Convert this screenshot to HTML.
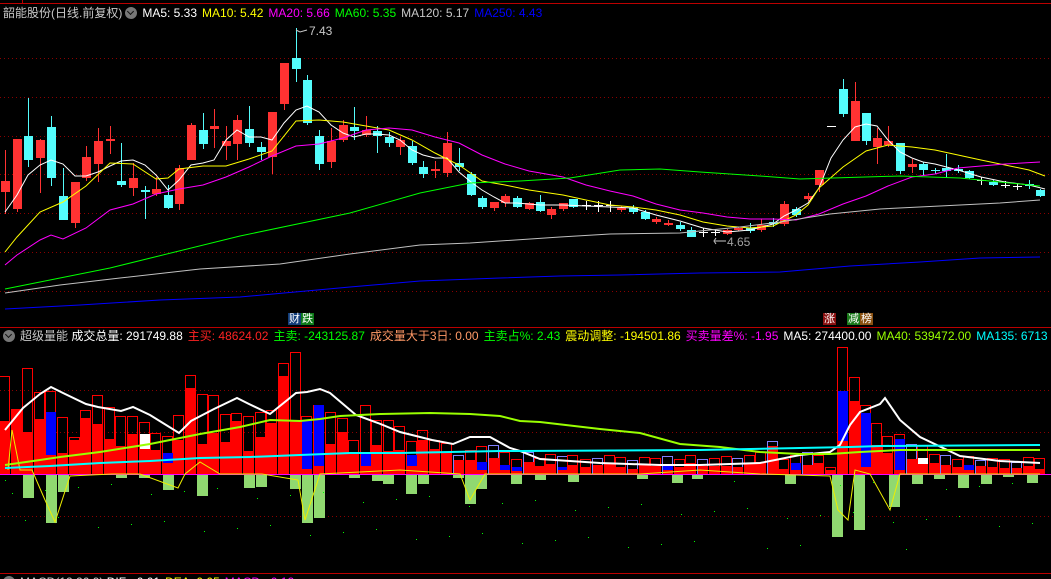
<!DOCTYPE html>
<html><head><meta charset="utf-8">
<style>
html,body{margin:0;padding:0;background:#000;overflow:hidden}
body{width:1051px;height:579px;position:relative;font-family:"Liberation Sans","Noto Sans CJK SC",sans-serif;font-size:12px}
.t{position:absolute;white-space:nowrap;line-height:14px}
.t span{margin-right:5px}
svg{position:absolute;left:0;top:0}
.ic{display:inline-block;width:12px;height:12px;border-radius:6px;background:#777;vertical-align:-2px;margin:0 5px 0 3px;position:relative}
.ic:after{content:"";position:absolute;left:3px;top:2px;width:4px;height:4px;border-right:1.5px solid #111;border-bottom:1.5px solid #111;transform:rotate(45deg)}
</style></head><body>
<svg id="s" width="1051" height="579" xmlns="http://www.w3.org/2000/svg"></svg>
<div class="t" style="left:3px;top:6px;color:#c8c8c8">韶能股份(日线.前复权)<i class="ic"></i><span style="color:#fff">MA5: 5.33</span><span style="color:#ff0">MA10: 5.42</span><span style="color:#f0f">MA20: 5.66</span><span style="color:#0f0">MA60: 5.35</span><span style="color:#c8c8c8">MA120: 5.17</span><span style="color:#00f">MA250: 4.43</span></div>
<div class="t" style="left:309px;top:24px;color:#c8c8c8">7.43</div>
<div class="t" style="left:727px;top:235px;color:#a0a0a0">4.65</div>
<div class="t" style="left:288px;top:312px;color:#fff;font-size:11px"><b style="font-weight:normal;background:#123d7a;padding:0 1px">财</b><b style="font-weight:normal;background:#0d7a18;padding:0 1px">跌</b></div>
<div class="t" style="left:823px;top:312px;color:#fff;font-size:11px"><b style="font-weight:normal;background:#8a1010;padding:0 1px">涨</b></div>
<div class="t" style="left:847px;top:312px;color:#fff;font-size:11px"><b style="font-weight:normal;background:#1a7a1a;padding:0 1px">减</b><b style="font-weight:normal;background:#8a5010;padding:0 1px">榜</b></div>
<div class="t" style="left:0px;top:329px;color:#c8c8c8"><i class="ic"></i>超级量能 <span style="color:#fff">成交总量: 291749.88</span><span style="color:#f22">主买: 48624.02</span><span style="color:#0f0">主卖: -243125.87</span><span style="color:#ff9966">成交量大于3日: 0.00</span><span style="color:#0f0">主卖占%: 2.43</span><span style="color:#ff0">震动调整: -194501.86</span><span style="color:#f0f">买卖量差%: -1.95</span><span style="color:#fff">MA5: 274400.00</span><span style="color:#9f0">MA40: 539472.00</span><span style="color:#0ff">MA135: 6713</span></div>
<div class="t" style="left:0px;top:575px;color:#c8c8c8"><i class="ic"></i>MACD(12,26,9) <span style="color:#fff">DIF: -0.01</span><span style="color:#ff0">DEA: 0.05</span><span style="color:#f0f">MACD: -0.12</span></div>
<script>
var s=document.getElementById('s'),h='';
function L(x1,y1,x2,y2,c,w,d){h+='<line x1="'+x1+'" y1="'+y1+'" x2="'+x2+'" y2="'+y2+'" stroke="'+c+'" stroke-width="'+(w||1)+'"'+(d?' stroke-dasharray="'+d+'"':'')+' shape-rendering="crispEdges"/>';}
function R(x,y,w,ht,f,st){h+='<rect x="'+x+'" y="'+y+'" width="'+w+'" height="'+ht+'" fill="'+(f||'none')+'"'+(st?' stroke="'+st+'"':'')+' shape-rendering="crispEdges"/>';}
function P(pts,c,w){h+='<polyline fill="none" stroke="'+c+'" stroke-width="'+(w||1)+'" points="'+pts.map(function(p){return p.join(',')}).join(' ')+'"/>';}
L(0,3.5,1051,3.5,'#b00');L(22.5,0,22.5,3,'#b00');
L(0,327.5,1051,327.5,'#b00');L(0,573.5,1051,573.5,'#b00');
[58,97,136,174,213,252,291].forEach(function(y){L(0,y+.5,1051,y+.5,'#8a0000',1,'1 3')});
[390,432,516].forEach(function(y){L(0,y+.5,1051,y+.5,'#8a0000',1,'1 3')});
var C=[[5,181,192,150,214,'r'],[17,139,209,139,212,'r'],[28,136,160,98,167,'c'],[40,140,158,139,193,'r'],[51,127,178,116,186,'c'],[63,196,220,168,220,'c'],[75,182,223,182,228,'r'],[86,157,178,146,181,'r'],[98,141,164,128,182,'r'],[110,139,141,126,154,'r'],[121,181,185,143,187,'c'],[133,178,188,163,196,'r'],[145,190,192,186,219,'c'],[156,189,194,177,196,'r'],[168,195,208,185,209,'c'],[179,168,204,165,210,'r'],[191,125,160,123,160,'r'],[203,130,144,113,149,'c'],[214,126,129,109,148,'r'],[226,141,146,126,160,'r'],[237,120,144,115,160,'r'],[249,129,143,106,147,'c'],[261,147,152,142,160,'c'],[272,112,157,112,174,'r'],[284,63,104,63,110,'r'],[296,58,69,28,82,'c'],[307,80,123,75,125,'c'],[319,136,164,130,170,'c'],[331,141,162,128,168,'r'],[343,125,140,120,142,'r'],[354,127,131,107,140,'c'],[366,130,135,116,137,'r'],[377,131,136,126,153,'c'],[389,137,143,132,147,'c'],[400,140,147,137,155,'r'],[412,146,163,141,165,'c'],[423,167,174,161,178,'c'],[435,169,171,161,178,'r'],[447,143,173,132,177,'r'],[459,163,167,148,171,'c'],[471,174,195,172,196,'c'],[482,198,207,196,209,'c'],[494,202,208,202,211,'r'],[505,196,203,194,207,'r'],[517,198,207,196,208,'c'],[529,203,209,202,210,'r'],[540,202,211,195,212,'c'],[551,209,215,207,219,'r'],[563,203,209,203,211,'r'],[573,199,207,199,208,'c'],[586,205,206,201,210,'w'],[598,205,206,201,212,'w'],[610,205,206,201,212,'w'],[621,208,210,206,212,'r'],[633,208,212,205,214,'c'],[645,212,219,210,220,'c'],[656,219,222,217,224,'r'],[668,223,225,220,226,'r'],[680,225,229,222,231,'c'],[691,230,237,227,237,'c'],[703,232,233,228,237,'w'],[715,232,233,229,236,'w'],[727,230,234,229,235,'r'],[738,228,230,227,231,'r'],[750,228,231,223,233,'c'],[761,225,230,219,232,'r'],[773,222,224,218,227,'c'],[784,204,224,201,226,'r'],[796,209,215,207,217,'c'],[808,196,199,193,201,'r'],[819,170,185,170,192,'r'],[831,126,127,126,127,'w'],[843,89,114,79,117,'c'],[855,101,141,82,141,'r'],[866,113,141,113,145,'c'],[877,138,147,128,164,'r'],[888,141,145,126,147,'r'],[900,143,171,143,174,'c'],[912,164,167,159,173,'r'],[923,164,170,162,175,'c'],[935,170,171,168,174,'c'],[946,168,171,154,178,'c'],[958,169,171,165,173,'c'],[969,171,178,170,179,'c'],[981,180,181,177,185,'w'],[993,182,185,180,186,'c'],[1005,185,186,181,188,'w'],[1017,186,187,183,190,'w'],[1029,184,186,180,189,'c'],[1040,190,196,189,197,'c']];
C.forEach(function(c){var col=c[5]=='r'?'#ff3232':c[5]=='c'?'#54fcfc':'#fff';var x=c[0];
L(x+.5,c[3],x+.5,c[4],col);var ht=Math.max(1,c[2]-c[1]);R(x-4,c[1],9,ht,col);});
P([[296,30],[300,32],[307,30]],'#c8c8c8');P([[715,241],[726,241]],'#c8c8c8');P([[716,238],[714,241],[716,244]],'#c8c8c8');
P([[5,212],[17,195],[28,175],[40,165],[51,160],[63,164],[75,176],[86,176],[98,172],[110,166],[121,161],[133,160],[145,165],[156,175],[168,190],[179,180],[191,165],[203,163],[214,160],[226,140],[237,130],[249,137],[261,137],[272,140],[284,123],[296,110],[307,106],[319,112],[331,125],[343,133],[354,137],[366,134],[377,134],[389,135],[400,140],[412,150],[423,155],[435,158],[447,158],[459,172],[471,182],[482,190],[494,197],[505,203],[517,203],[540,205],[563,205],[586,206],[610,207],[633,208],[656,215],[680,221],[703,228],[727,232],[750,230],[773,224],[784,216],[796,210],[808,203],[819,188],[831,158],[843,140],[855,127],[866,124],[877,126],[888,140],[900,152],[912,158],[923,162],[935,164],[958,170],[981,177],[1005,182],[1029,185],[1045,189]],'#fff');
P([[5,252],[17,237],[40,212],[63,202],[86,186],[110,163],[133,164],[156,179],[168,178],[179,169],[203,166],[226,166],[249,159],[272,151],[296,121],[319,120],[343,122],[366,126],[389,130],[412,140],[435,153],[459,165],[482,181],[505,185],[529,190],[563,195],[586,200],[610,205],[633,207],[656,210],[680,215],[703,222],[727,226],[750,228],[773,226],[796,215],[808,205],[819,188],[843,167],[866,151],[888,145],[912,147],[935,150],[958,155],[981,160],[1005,165],[1029,170],[1045,176]],'#ff0');
P([[5,265],[17,255],[40,240],[51,235],[63,239],[86,228],[110,210],[133,204],[156,194],[179,189],[203,185],[226,177],[249,167],[272,156],[296,146],[319,144],[343,138],[366,130],[389,128],[412,130],[435,137],[459,143],[482,155],[505,164],[529,171],[563,177],[586,185],[610,191],[633,196],[656,204],[680,210],[703,213],[727,217],[750,219],[773,219],[796,220],[819,214],[843,204],[866,196],[888,186],[912,177],[935,174],[958,168],[981,166],[1005,164],[1040,162]],'#f0f');
P([[5,289],[110,268],[240,236],[350,213],[420,193],[470,183],[520,181],[570,178],[620,170],[660,169],[700,172],[760,176],[800,179],[900,176],[960,178],[1040,186]],'#0f0');
P([[5,293],[60,285],[120,278],[200,269],[280,264],[350,254],[420,245],[470,243],[560,237],[610,234],[680,233],[740,227],[780,222],[830,214],[880,209],[940,206],[1000,203],[1040,200]],'#c0c0c0');
P([[5,309],[80,305],[160,300],[240,297],[350,287],[420,281],[500,278],[560,276],[620,275],[700,273],[780,272],[850,266],[920,262],[980,258],[1040,257]],'#00f');
var B=474;
var V=[[376,421],[409,409],[368,432],[392,419],[391,412,'b',455],[417,453],[437,440],[410,418],[395,424],[407,439],[416,446],[416,434],[422,434,'w',449],[433,450],[436,453,'b',463],[415,440],[375,388],[394,444],[395,433],[414,442],[413,421],[416,451],[412,437],[410,423],[363,376],[352,420],[416,420,'b',469],[405,405,'b',466],[412,444],[418,432],[440,453],[405,453,'b',466],[420,445],[420,451],[426,450],[441,455,'b',466],[430,440],[440,449],[443,452],[455,460],[450,460],[446,462,'b',470],[445,458],[452,465,'b',470],[459,467,'b',471],[452,462],[458,466],[454,464],[456,467,'b',470],[455,465],[459,467],[458,465],[455,464],[457,467],[460,469],[457,465],[458,466],[456,465,'b',470],[459,467],[455,463],[459,466],[458,466],[456,466],[458,467],[455,463],[452,462],[441,446],[459,469],[455,463,'b',470],[452,465],[455,463],[467,470],[347,391,'b',441],[377,401],[405,413,'b',467],[423,445],[436,453],[434,439,'b',470],[444,459],[445,458,'w',464],[454,463],[455,465],[459,467],[456,465,'b',470],[460,466],[458,467],[459,468],[462,468],[457,466],[458,469],[459,468],[461,468],[462,470],[460,466]];
V.forEach(function(v,i){if(i>=C.length)return;var x=C[i][0];var oc=i>=26&&v[0]>440&&!(i%3)?'#8080ff':'#f00';
R(x-5.5,v[0]+.5,10,B-v[0]-.5,null,oc);
if(v[2]=='b'){R(x-5,v[1],10,v[3]-v[1],'#00f');R(x-5,v[3],10,B-v[3],'#f00');}
else if(v[2]=='w'){R(x-5,v[1],10,v[3]-v[1],'#fff');R(x-5,v[3],10,B-v[3],'#f00');}
else R(x-5,v[1],10,B-v[1],'#f00');});
L(0,B+.5,1051,B+.5,'#f0f');
var N=[[23,498],[46,523],[58,492],[116,478],[139,478],[163,490],[197,496],[244,488],[256,487],[290,489],[302,523],[314,518],[349,478],[372,481],[383,484],[406,494],[418,484],[453,478],[465,504],[476,489],[511,484],[535,480],[568,482],[637,479],[672,483],[692,479],[785,484],[832,537],[854,530],[889,507],[912,484],[934,479],[958,488],[981,484],[1003,477],[1027,483]];
N.forEach(function(n){R(n[0],B+1,11,n[1]-B-1,'#90d870')});
P([[8,470],[12,430],[20,470],[32,470],[45,500],[55,522],[70,476],[112,474],[124,474],[140,474],[178,488],[185,474],[200,462],[220,474],[250,474],[262,474],[298,480],[305,520],[320,474],[400,470],[460,474],[470,500],[485,474],[540,474],[640,474],[700,470],[760,474],[830,476],[838,510],[848,520],[855,470],[870,474],[890,510],[900,474],[960,474],[980,474],[1040,474]],'#ee0',1);
P([[5,430],[23,408],[40,394],[51,387],[63,393],[86,404],[98,407],[121,411],[133,407],[150,415],[179,433],[191,421],[214,409],[237,398],[249,404],[270,414],[296,393],[307,392],[320,389],[330,393],[356,415],[378,423],[400,432],[432,440],[453,444],[470,437],[490,437],[510,448],[520,451],[540,459],[600,463],[660,465],[700,465],[760,463],[800,455],[830,452],[840,445],[850,425],[860,412],[880,404],[885,398],[900,420],[920,437],[960,456],[1000,461],[1040,463]],'#fff',2);
P([[5,465],[40,460],[60,457],[100,452],[150,444],[200,434],[240,427],[270,420],[300,421],[320,419],[340,416],[380,414],[430,413],[470,414],[500,416],[520,421],[540,422],[600,429],[640,433],[680,444],[720,447],[760,452],[800,454],[830,454],[860,452],[900,450],[1040,450]],'#9f0',2);
P([[5,468],[50,466],[100,463],[150,461],[200,458],[250,457],[300,455],[350,453],[400,453],[450,452],[500,451],[520,451],[700,450],[800,448],[850,447],[880,446],[1040,445]],'#0ff',2);
for(var i=0;i<60;i++){var x=(i*53)%1040+5,y=480+((i*37)%70);R(x,y,1,1,'#0f0');}
s.innerHTML=h;
</script>
</body></html>
